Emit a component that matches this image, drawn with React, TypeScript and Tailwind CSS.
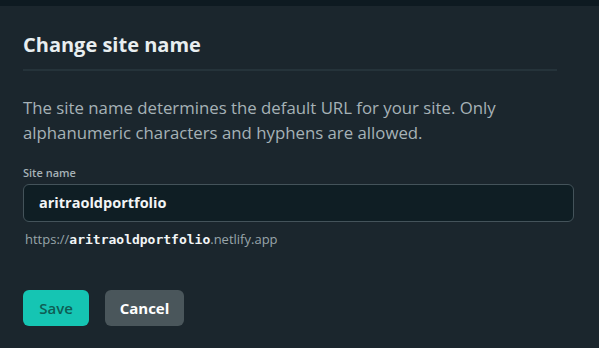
export default function App() {
  return (
    <div className="w-[599px] h-[348px] bg-[#1b262d] overflow-hidden" style={{ fontFamily: '"Open Sans", "Noto Sans", sans-serif' }}>
      <div className="h-[6px] bg-[#0e1a21]" />
      <div className="px-[23px]">
        <div className="w-[534px] border-b-2 border-[#25333a] pt-[26px] pb-[11px]">
          <h2 className="text-[20px] font-bold leading-[26px] text-[#e8eef0]">Change site name</h2>
        </div>
        <p className="mt-[24px] text-[16.8px] leading-[25px] text-[#a6b2b7]">
          The site name determines the default URL for your site. Only
          <br />
          alphanumeric characters and hyphens are allowed.
        </p>
        <label className="block mt-[21px] text-[11px] font-semibold text-[#a6b2b7] leading-[14px]">Site name</label>
        <div className="mt-[4px] w-[551px] h-[38px] rounded-[6px] border border-[#44535a] bg-[#0f1e24] flex items-center px-[15px]">
          <span className="text-[14.5px] font-bold text-[#f2f5f6]">aritraoldportfolio</span>
        </div>
        <div className="mt-[8px] ml-[2px] text-[13px] leading-[18px] text-[#98a5aa]">
          https://<span className="font-bold text-[#f2f5f6]" style={{ fontFamily: '"DejaVu Sans Mono", monospace' }}>aritraoldportfolio</span>.netlify.app
        </div>
        <div className="mt-[41px] flex gap-[16px]">
          <button className="h-[36px] w-[66px] rounded-[6px] bg-[#15c5b3] text-[15px] font-semibold text-[#0e5d55]">Save</button>
          <button className="h-[36px] w-[79px] rounded-[6px] bg-[#4a565b] text-[15px] font-bold text-white">Cancel</button>
        </div>
      </div>
    </div>
  );
}
